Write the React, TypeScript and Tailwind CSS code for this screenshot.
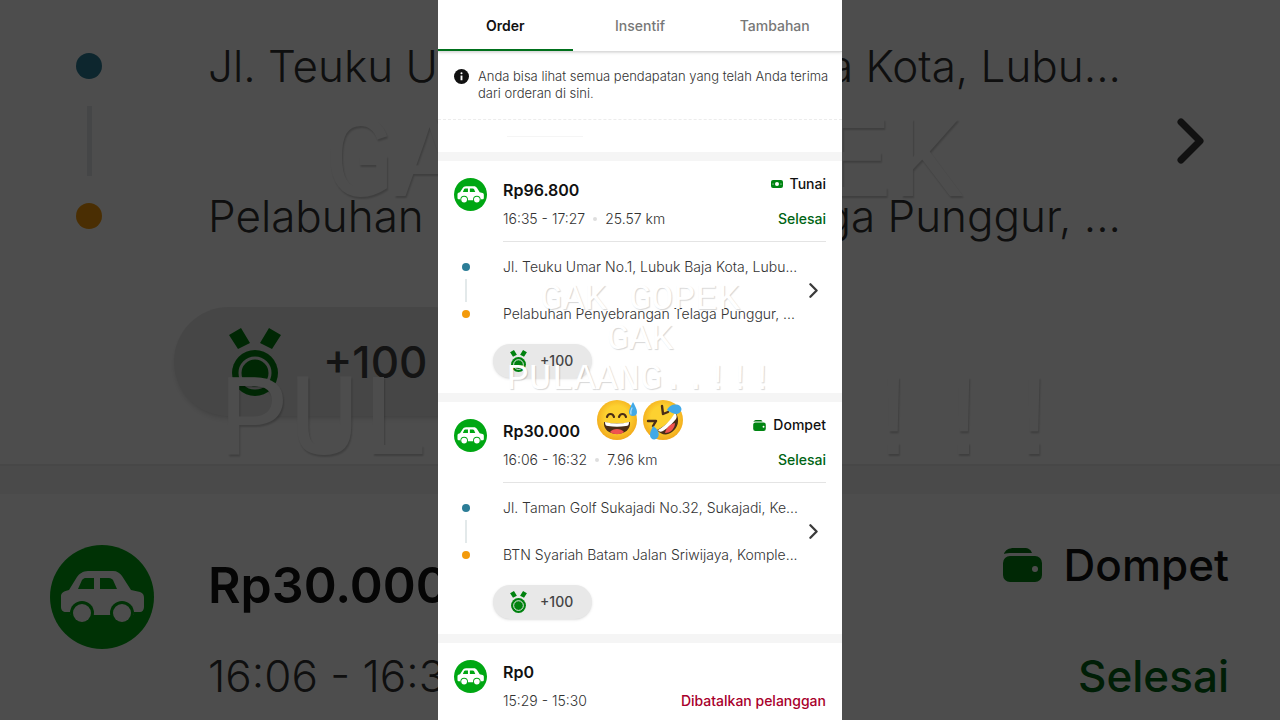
import React from 'react';

type IconProps = { className?: string };

type Order = {
  fare: string;
  time: string;
  distance?: string;
  payment?: 'Tunai' | 'Dompet';
  status: string;
  cancelled?: boolean;
  pickup?: string;
  dropoff?: string;
  points?: string;
};

const tabs = ['Order', 'Insentif', 'Tambahan'];

const orders: Order[] = [
  {
    fare: 'Rp96.800',
    time: '16:35 - 17:27',
    distance: '25.57 km',
    payment: 'Tunai',
    status: 'Selesai',
    pickup: 'Jl. Teuku Umar No.1, Lubuk Baja Kota, Lubu...',
    dropoff: 'Pelabuhan Penyebrangan Telaga Punggur, ...',
    points: '+100',
  },
  {
    fare: 'Rp30.000',
    time: '16:06 - 16:32',
    distance: '7.96 km',
    payment: 'Dompet',
    status: 'Selesai',
    pickup: 'Jl. Taman Golf Sukajadi No.32, Sukajadi, Ke...',
    dropoff: 'BTN Syariah Batam Jalan Sriwijaya, Komple...',
    points: '+100',
  },
  {
    fare: 'Rp0',
    time: '15:29 - 15:30',
    status: 'Dibatalkan pelanggan',
    cancelled: true,
  },
];

const CarIcon: React.FC<IconProps> = ({ className }) => (
  <svg viewBox="0 0 104 104" className={className} aria-hidden="true">
    <circle cx="52" cy="52" r="52" fill="#00a713" />
    <path
      d="M38 26h25c4 0 7 2 9 5l9 14 9 2c3 1 4 3 4 6v9c0 3-2 5-4 5h-6v3H20v-3h-4c-3 0-5-2-5-5V51c0-3 3-5 8-6l8-13c2-3 6-6 11-6z"
      fill="#fff"
    />
    <path d="M35 33h9v11H28l4-9c1-1 2-2 3-2zM50 33h9c2 0 3 1 4 2l4 9H50z" fill="#00a713" />
    <circle cx="32" cy="68" r="12" fill="#00a713" />
    <circle cx="72" cy="68" r="12" fill="#00a713" />
    <circle cx="32" cy="68" r="9" fill="#fff" />
    <circle cx="72" cy="68" r="9" fill="#fff" />
  </svg>
);

const MedalIcon: React.FC<IconProps> = ({ className }) => (
  <svg viewBox="0 0 52 68" className={className} aria-hidden="true">
    <path d="M0 7L12 0l9 15-12 6zM52 7L40 0l-9 15 12 6z" fill="#00820f" />
    <circle cx="26" cy="45" r="23" fill="#00820f" />
    <circle cx="26" cy="45" r="15" fill="none" stroke="#e8e8e8" strokeWidth="3" />
  </svg>
);

const CashIcon: React.FC<IconProps> = ({ className }) => (
  <svg viewBox="0 0 12 8" className={className} aria-hidden="true">
    <rect width="12" height="8" rx="2" fill="#008512" />
    <circle cx="6" cy="4" r="2" fill="#fff" />
    <circle cx="2" cy="4" r="0.6" fill="#fff" />
    <circle cx="10" cy="4" r="0.6" fill="#fff" />
  </svg>
);

const WalletIcon: React.FC<IconProps> = ({ className }) => (
  <svg viewBox="0 0 39 34" className={className} aria-hidden="true">
    <path d="M1 6C2 2 6 0 11 0h10c5 0 7 2 8 5H9C6 5 3 5 1 6z" fill="#00760f" />
    <rect y="8" width="39" height="26" rx="7" fill="#008512" />
    <circle cx="32" cy="21" r="3" fill="#fff" />
  </svg>
);

const Chevron: React.FC<IconProps> = ({ className }) => (
  <svg viewBox="0 0 27 46" className={className} fill="none" aria-hidden="true">
    <path d="M4 4l19 19L4 42" stroke="#3a3a3a" strokeWidth="7" strokeLinecap="round" strokeLinejoin="round" />
  </svg>
);

const InfoIcon: React.FC<IconProps> = ({ className }) => (
  <svg viewBox="0 0 16 16" className={className} aria-hidden="true">
    <circle cx="8" cy="8" r="8" fill="#111" />
    <circle cx="8" cy="4.5" r="1.1" fill="#fff" />
    <path d="M7 7h2v5H7z" fill="#fff" />
  </svg>
);

const SweatSmile: React.FC<IconProps> = ({ className }) => (
  <svg viewBox="0 0 42 42" className={className} aria-hidden="true">
    <defs>
      <radialGradient id="face-sweat" cx="50%" cy="45%" r="55%">
        <stop offset="55%" stopColor="#fdd130" />
        <stop offset="100%" stopColor="#f2a91c" />
      </radialGradient>
    </defs>
    <circle cx="21" cy="21" r="20" fill="url(#face-sweat)" />
    <path
      d="M11 18c1-4 6-4 7 0M23 18c1-4 6-4 7 0"
      fill="none"
      stroke="#4a2d17"
      strokeWidth="2.2"
      strokeLinecap="round"
    />
    <path d="M8 23c8 2 18 2 26 0 1 7-5 12-13 12S7 30 8 23z" fill="#4a2d17" />
    <path d="M9 23c8 2 16 2 24 0 0 3-1 4-3 4-6 1-12 1-18 0-2 0-3-1-3-4z" fill="#fff" />
    <path d="M14 33c3-4 11-4 14 0-4 3-10 3-14 0z" fill="#ef5350" />
    <path d="M37 3c2 4 4 7 4 10a4 4 0 0 1-8 0c0-3 2-6 4-10z" fill="#42a9e8" />
    <path d="M36 9c-1 2-2 4-1 6" fill="none" stroke="#a5dcfa" strokeWidth="1.2" strokeLinecap="round" />
  </svg>
);

const RollingLaugh: React.FC<IconProps> = ({ className }) => (
  <svg viewBox="0 0 42 42" className={className} aria-hidden="true">
    <defs>
      <radialGradient id="face-rofl" cx="50%" cy="45%" r="55%">
        <stop offset="55%" stopColor="#fdd130" />
        <stop offset="100%" stopColor="#f2a91c" />
      </radialGradient>
    </defs>
    <circle cx="21" cy="21" r="20" fill="url(#face-rofl)" />
    <path
      d="M20 7l1 8 5-2M6 22l8 0-3 5"
      fill="none"
      stroke="#4a2d17"
      strokeWidth="2.4"
      strokeLinecap="round"
      strokeLinejoin="round"
    />
    <path d="M34 14c4 7 2 15-4 19-5 4-11 3-15-2 8-4 14-9 19-17z" fill="#4a2d17" />
    <path d="M33 14c2 2 2 4 1 6-4 5-8 9-13 12-2 1-4 1-5-1 7-4 12-9 17-17z" fill="#fff" />
    <path d="M23 34c1-5 5-9 10-10 0 5-4 10-10 10z" fill="#ef5350" />
    <path d="M25 11c2-5 9-7 13-4 3 3 1 7-3 8-4 0-7-2-10-4z" fill="#42a9e8" />
    <path d="M11 27c5 3 7 8 5 11-2 4-8 3-8-2 0-4 2-6 3-9z" fill="#42a9e8" />
  </svg>
);

const OrderCard: React.FC<{ order: Order }> = ({ order }) => (
  <article className="bg-white border-t-[9px] border-[#f5f5f5] px-4 pt-[13px] pb-[15px]">
    <div className="flex gap-4">
      <CarIcon className="w-[33px] h-[33px] mt-1 shrink-0" />
      <div className="flex grow justify-between pb-3 border-b border-[#e4e4e4] whitespace-nowrap">
        <div>
          <h2 className="mt-1 text-base leading-6 font-semibold text-[#111]">{order.fare}</h2>
          <p className="mt-[7px] flex items-center text-sm leading-5 font-light text-[#333]">
            {order.time}
            {order.distance && (
              <>
                <span className="w-1 h-1 mx-2 rounded-full bg-[#dedede]" />
                {order.distance}
              </>
            )}
          </p>
        </div>
        <div className="flex flex-col items-end justify-between text-sm leading-5 font-medium">
          <p className="flex items-center gap-[7px] text-[#111]">
            {order.payment === 'Tunai' && <CashIcon className="w-3 h-2" />}
            {order.payment === 'Dompet' && <WalletIcon className="w-[13px] h-[11px]" />}
            {order.payment}
          </p>
          <p className={order.cancelled ? 'text-[#a8002b]' : 'text-[#006414]'}>{order.status}</p>
        </div>
      </div>
    </div>

    {order.pickup && (
      <div className="flex items-center pt-[15px]">
        <div className="w-6 shrink-0 flex flex-col items-center">
          <span className="w-2 h-2 my-[6px] rounded-full bg-[#2c7d97]" />
          <span className="w-[2px] h-[23px] my-[2px] bg-[#e3e9ea]" />
          <span className="w-2 h-2 my-[6px] rounded-full bg-[#f39a0b]" />
        </div>
        <div className="grow min-w-0 ml-[25px] flex flex-col gap-[27px] text-sm leading-5 font-light text-[#333] whitespace-nowrap">
          <p>{order.pickup}</p>
          <p>{order.dropoff}</p>
        </div>
        <button className="mr-2 shrink-0" aria-label="Lihat detail">
          <Chevron className="w-[9px] h-[15px]" />
        </button>
      </div>
    )}

    {order.points && (
      <div className="mt-5 ml-[39px] w-[99px] h-[34px] pl-[17px] flex items-center gap-[13px] rounded-full bg-[#e8e8e8] shadow-sm">
        <MedalIcon className="w-[17px] h-[22px]" />
        <span className="text-sm leading-5 font-medium text-[#444]">{order.points}</span>
      </div>
    )}
  </article>
);

// Enlarged, dimmed edges of the order list on either side of the phone
const LeftBackdrop: React.FC = () => (
  <aside
    className="relative flex-1 min-w-0 overflow-hidden bg-white opacity-30 whitespace-nowrap"
    aria-hidden="true"
  >
    <div className="h-[464px] pt-[31px]">
      <div className="flex">
        <div className="w-[26px] ml-[76px] shrink-0 flex flex-col items-center">
          <span className="w-[26px] h-[26px] my-[22px] rounded-full bg-[#2c7d97]" />
          <span className="w-[5px] h-[70px] my-[5px] bg-[#e3e9ea]" />
          <span className="w-[26px] h-[26px] my-[22px] rounded-full bg-[#f39a0b]" />
        </div>
        <div className="ml-[106px] flex flex-col gap-20 text-[44px] leading-[70px] font-light text-[#333]">
          <p>Jl. Teuku U</p>
          <p>Pelabuhan</p>
        </div>
      </div>
      <div className="mt-14 ml-[174px] w-[314px] h-[109px] pl-[55px] flex items-center gap-[42px] rounded-full bg-[#e8e8e8] shadow-md">
        <MedalIcon className="w-[52px] h-[68px]" />
        <span className="text-[44px] leading-[70px] font-medium text-[#444]">+100</span>
      </div>
    </div>
    <div className="h-[30px] border-t-2 border-[#ececec] bg-[#f5f5f5]" />
    <div className="flex gap-[54px] pl-[50px] pt-[51px]">
      <CarIcon className="w-[104px] h-[104px] shrink-0" />
      <div className="pt-[5px] flex flex-col gap-[21px]">
        <p className="text-[50px] leading-[70px] font-semibold text-[#111]">Rp30.000</p>
        <p className="text-[44px] leading-[70px] font-light text-[#333]">16:06 - 16:3</p>
      </div>
    </div>
    <div className="absolute inset-x-0 top-[101px] flex flex-col gap-[129px] font-['Liberation_Mono',monospace] text-[117px] leading-[129px] text-white [text-shadow:1px_2px_2px_rgba(0,0,0,0.2)]">
      <p className="pl-[324px]">GA</p>
      <p className="pl-[219px]">PUL</p>
    </div>
  </aside>
);

const RightBackdrop: React.FC = () => (
  <aside
    className="relative flex-1 min-w-0 overflow-hidden bg-white opacity-30 whitespace-nowrap"
    aria-hidden="true"
  >
    <div className="h-[464px] pt-[31px]">
      <div className="flex items-center justify-end gap-14 pr-[76px]">
        <div className="flex flex-col items-end gap-20 text-[44px] leading-[70px] font-light text-[#333]">
          <p>a Kota, Lubu...</p>
          <p>ga Punggur, ...</p>
        </div>
        <Chevron className="w-[27px] h-[46px] shrink-0" />
      </div>
    </div>
    <div className="h-[30px] border-t-2 border-[#ececec] bg-[#f5f5f5]" />
    <div className="flex flex-col items-end gap-[41px] pt-9 pr-[51px] text-[44px] leading-[70px] font-medium">
      <p className="flex items-center gap-[22px] text-[#111]">
        <WalletIcon className="w-[39px] h-[34px]" />
        Dompet
      </p>
      <p className="text-[#006414]">Selesai</p>
    </div>
    <div className="absolute inset-x-0 top-[101px] flex flex-col items-end gap-[129px] font-['Liberation_Mono',monospace] text-[117px] leading-[129px] text-white [text-shadow:1px_2px_2px_rgba(0,0,0,0.2)]">
      <p className="pr-[317px]">EK</p>
      <p className="pr-[211px]">!!!</p>
    </div>
  </aside>
);

const Caption: React.FC = () => (
  <div className="absolute inset-x-0 top-[279px] text-center font-['Liberation_Mono',monospace] text-[37px] leading-10 text-white pointer-events-none [text-shadow:1px_1px_1px_rgba(0,0,0,0.16)]">
    <p>GAK GOPEK</p>
    <p>GAK</p>
    <p>PULAANG..!!!</p>
    <div className="flex justify-center gap-1">
      <SweatSmile className="w-[42px] h-[42px]" />
      <RollingLaugh className="w-[42px] h-[42px]" />
    </div>
  </div>
);

export default function App() {
  return (
    <div className="flex h-screen overflow-hidden bg-black font-[Inter,sans-serif]">
      <LeftBackdrop />

      <main className="relative w-[404px] max-w-full shrink-0 overflow-hidden bg-white">
        <nav className="flex border-b border-[#dcdcdc] shadow-sm">
          {tabs.map((tab, idx) => (
            <button
              key={tab}
              className={
                idx === 0
                  ? 'flex-1 pt-4 pb-[13px] border-b-2 border-[#00701c] text-sm leading-5 font-semibold text-[#111]'
                  : 'flex-1 pt-4 pb-[13px] border-b-2 border-transparent text-sm leading-5 font-medium text-[#777]'
              }
            >
              {tab}
            </button>
          ))}
        </nav>

        <div className="flex items-start gap-[9px] pl-4 pt-4 pb-[17px] border-b border-dashed border-[#ececec]">
          <InfoIcon className="w-[15px] h-[15px] mt-[1px] shrink-0" />
          <p className="text-[13px] leading-[17px] font-light text-[#333]">
            Anda bisa lihat semua pendapatan yang telah Anda terima dari orderan di sini.
          </p>
        </div>
        <div className="h-8 pt-4 pl-[69px]">
          <div className="w-[76px] h-px bg-[#f5f5f5]" />
        </div>

        {orders.map((order) => (
          <OrderCard key={order.fare} order={order} />
        ))}

        <Caption />
      </main>

      <RightBackdrop />
    </div>
  );
}
